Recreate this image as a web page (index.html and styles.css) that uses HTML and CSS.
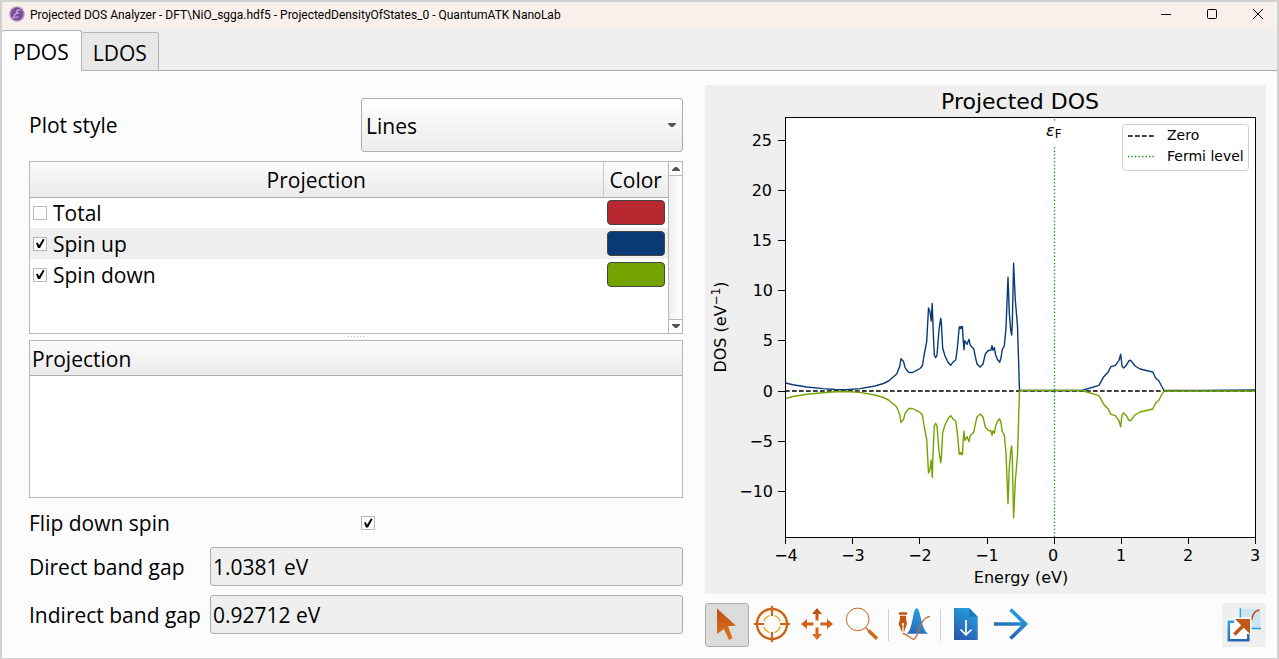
FILE: index.html
```html
<!DOCTYPE html>
<html lang="en">
<head>
<meta charset="utf-8">
<title>Projected DOS Analyzer</title>
<link rel="stylesheet" href="styles.css">
</head>
<body>
<div class="window">
  <header class="titlebar">
    <svg class="app-icon" viewBox="0 0 16 16" aria-hidden="true">
      <circle cx="8" cy="8" r="7.8" fill="#b79acb"/>
      <circle cx="8" cy="8" r="6.4" fill="#7d4a9e"/>
      <path d="M11.5 3.8C8.5 3.6 6.6 5 7.4 6.4c.4.7 1.4.8 2.4.7C7.4 7.300 5 8.600 5.200 10.200c.2 1.500 2.600 1.300 4.200.5M3.600 12.500l2-2.200" fill="none" stroke="#c9addb" stroke-width="1.200"/>
    </svg>
    <h1 class="title">Projected DOS Analyzer - DFT\NiO_sgga.hdf5 - ProjectedDensityOfStates_0 - QuantumATK NanoLab</h1>
    <div class="controls">
      <button class="control" type="button" aria-label="Minimize"><svg viewBox="0 0 12 12"><path d="M1 6.500h10" /></svg></button>
      <button class="control" type="button" aria-label="Maximize"><svg viewBox="0 0 12 12"><rect x="1.500" y="1.500" width="9" height="9" rx="1"/></svg></button>
      <button class="control" type="button" aria-label="Close"><svg viewBox="0 0 12 12"><path d="M1 1l10 10M11 1L1 11"/></svg></button>
    </div>
  </header>

  <div class="tabs" role="tablist">
    <button class="tab tab-active" type="button" role="tab" aria-selected="true">PDOS</button>
    <button class="tab" type="button" role="tab" aria-selected="false">LDOS</button>
  </div>

  <main class="content">
    <section class="settings">
      <div class="form-row">
        <label for="plot-style">Plot style</label>
        <div class="combo">
          <select id="plot-style" class="combo-select"><option>Lines</option></select>
          <svg class="combo-arrow" viewBox="0 0 8 4" aria-hidden="true"><path d="M0 0h8v1L5 4H3L0 1z"/></svg>
        </div>
      </div>

      <div class="projections">
        <div class="list">
          <table class="list-table">
            <thead><tr><th>Projection</th><th class="color-col">Color</th></tr></thead>
            <tbody>
              <tr><td><label class="check-label"><input class="check" type="checkbox">Total</label></td><td class="color-cell"><button class="swatch swatch-red" type="button" aria-label="Total color"></button></td></tr>
              <tr><td><label class="check-label"><input class="check" type="checkbox" checked>Spin up</label></td><td class="color-cell"><button class="swatch swatch-blue" type="button" aria-label="Spin up color"></button></td></tr>
              <tr><td><label class="check-label"><input class="check" type="checkbox" checked>Spin down</label></td><td class="color-cell"><button class="swatch swatch-green" type="button" aria-label="Spin down color"></button></td></tr>
            </tbody>
          </table>
          <div class="scrollbar">
            <button class="scroll-button" type="button" aria-label="Scroll up"><svg viewBox="0 0 8 4"><path d="M3 0h2l3 3v1H0V3z"/></svg></button>
            <button class="scroll-button" type="button" aria-label="Scroll down"><svg viewBox="0 0 8 4"><path d="M0 0h8v1L5 4H3L0 1z"/></svg></button>
          </div>
        </div>
        <div class="splitter"></div>
        <div class="detail">
          <table class="list-table detail-table"><thead><tr><th>Projection</th></tr></thead></table>
        </div>
      </div>

      <div class="form-row flip-row">
        <label for="flip">Flip down spin</label>
        <input id="flip" class="check" type="checkbox" checked>
      </div>

      <div class="gaps">
        <label for="direct">Direct band gap</label>
        <input id="direct" class="field" type="text" readonly value="1.0381 eV">
        <label for="indirect">Indirect band gap</label>
        <input id="indirect" class="field" type="text" readonly value="0.92712 eV">
      </div>
    </section>

    <section class="plot">
      <svg class="chart" viewBox="705 85 561 509" role="img" aria-label="Projected DOS">
        <rect x="785" y="117" width="471" height="421" fill="#fff"/>
        <path class="zero" d="M785 391H1255"/>
        <g class="series">
          <path class="spin-up" d="M785.500 383L793 384.800 806.700 387 823 388.600 835 389.500 846 389.700 860 388.600 875 386 883.500 383.500 888.500 381 893.300 377 896.700 374 899.700 366.500 901 358.700 903.500 361.500 905 367.300 906.700 370 909 372.500 912.500 372.500 916.700 370.300 920 368.500 922.300 366 924.300 354 926.700 341.700 928.500 308 930 311.700 931.200 321 932.200 303.500 933.500 338.300 934.300 355 935.700 357.700 937 355 939 330 940.700 318.300 941.300 322 942.700 348.300 945 356 948.300 362.700 950.700 365.300 953.300 361.700 955.700 360 957.300 348.300 959.300 326.700 960.200 328.500 961 326.500 961.800 328.500 962.400 326.500 963.300 341.700 964 349.700 964.700 340.700 967 344.300 969 339.300 970.300 345.300 973.700 348.700 975.700 358.300 977 364 980.300 367 983 364 985.300 354 988 350.700 991 350 992 345.700 993 350.300 994.300 347.700 995.700 355 997.300 359.300 999.700 362.300 1001 358 1002.300 349.300 1004.300 346 1006 328.300 1008 277.300 1009.300 313.300 1010.700 330 1011.700 335 1012.300 323.300 1013.600 263.300 1015.300 300 1017.500 326 1019.500 390.500H1081.700L1099 385.300 1103.300 377.300 1108.300 371.700 1111 366.700 1115.300 365.300 1119 360.300 1120.700 354.300 1122 366 1123.700 368 1126.300 365.300 1129 360.700 1130.700 360.300 1135 366 1140 369 1152.700 372 1155.700 378 1159 381 1161 385 1164 390.500H1200L1255 390"/>
          <path class="spin-down" d="M785.500 398.500L793 396.500 806.700 394.300 823 392.700 835 391.700 846 391.500 860 392.400 875 395 883.500 397.500 888.500 400 893.300 404 896.700 407 899.700 414.500 901 422.300 903.500 419.500 905 413.700 906.700 411 909 408.500 912.500 408.500 916.700 410.700 920 412.500 922.300 415 924.300 427 926.700 439.300 928.500 473 930 469.300 931.200 460 932.200 477.500 933.500 442.700 934.300 426 935.700 423.300 937 426 939 451 940.700 462.700 941.300 459 942.700 432.700 945 425 948.300 418.300 950.700 415.700 953.300 419.300 955.700 421 957.300 432.700 959.300 454.300 960.200 452.500 961 454.500 961.800 452.500 962.400 454.500 963.300 439.300 964 431.300 964.700 440.300 967 436.700 969 441.700 970.300 435.700 973.700 432.300 975.700 422.700 977 417 980.300 414 983 417 985.300 427 988 430.300 991 431 992 435.300 993 430.700 994.300 433.300 995.700 426 997.300 421.700 999.700 418.700 1001 423 1002.300 431.700 1004.300 435 1006 452.700 1008 503.700 1009.300 467.700 1010.700 451 1011.700 446 1012.300 457.700 1013.600 517.700 1015.300 481 1017.500 455 1019.500 390.500H1081.700L1099 395.700 1103.300 403.700 1108.300 409.300 1111 414.300 1115.300 415.700 1119 420.700 1120.700 426.700 1122 415 1123.700 413 1126.300 415.700 1129 420.300 1130.700 420.700 1135 415 1140 412 1152.700 409 1155.700 403 1159 400 1161 396 1164 391H1255"/>
        </g>
        <path class="fermi" d="M1054.500 537V117"/>
        <rect x="1042" y="122" width="24" height="23" fill="#fff"/>
        <text class="tick" x="1046" y="136"><tspan font-style="italic">ε</tspan><tspan class="sub" dy="2">F</tspan></text>
        <rect class="axes" x="785.500" y="117.500" width="470" height="420"/>
        <path class="axes" d="M778 140.500h7M778 190.500h7M778 240.500h7M778 290.500h7M778 340.500h7M778 391.500h7M778 441.500h7M778 491.500h7M785.500 538v6M852.500 538v6M919.500 538v6M987.500 538v6M1054.500 538v6M1121.500 538v6M1188.500 538v6M1255.500 538v6"/>
        <g class="tick" text-anchor="end">
          <text x="772" y="146">25</text><text x="772" y="196">20</text><text x="772" y="246">15</text><text x="773" y="296">10</text>
          <text x="773" y="346">5</text><text x="773" y="397">0</text><text x="773" y="447">−5</text><text x="773" y="497">−10</text>
        </g>
        <g class="tick" text-anchor="middle">
          <text x="786" y="561">−4</text><text x="853" y="561">−3</text><text x="920" y="561">−2</text><text x="987" y="561">−1</text>
          <text x="1053" y="561">0</text><text x="1121" y="561">1</text><text x="1188" y="561">2</text><text x="1255" y="561">3</text>
          <text x="1021" y="583">Energy (eV)</text>
          <text transform="translate(726 327) rotate(-90)">DOS (eV<tspan class="sub" dy="-6">−1</tspan><tspan dy="6">)</tspan></text>
        </g>
        <text class="chart-title" x="1020" y="109" text-anchor="middle">Projected DOS</text>
        <rect x="1122.500" y="124.500" width="126" height="46" rx="3" fill="#fff" stroke="#d0d0d0"/>
        <path class="zero" d="M1128 136H1156"/>
        <path class="fermi" d="M1128 156.500H1156"/>
        <g class="legend"><text x="1167" y="140">Zero</text><text x="1167" y="161">Fermi level</text></g>
      </svg>

      <div class="toolbar">
        <svg class="defs" aria-hidden="true"><defs>
          <linearGradient id="orange" x1="0" y1="0" x2="0" y2="1"><stop offset="0" stop-color="#bd4f12"/><stop offset="1" stop-color="#dc7420"/></linearGradient>
          <linearGradient id="blue" gradientUnits="userSpaceOnUse" x1="32" y1="6" x2="12" y2="37"><stop offset="0" stop-color="#27a4e4"/><stop offset="1" stop-color="#2a54a8"/></linearGradient>
          <linearGradient id="box-blue" gradientUnits="userSpaceOnUse" x1="10" y1="18" x2="16" y2="38"><stop offset="0" stop-color="#2a9fe0"/><stop offset="1" stop-color="#2860b4"/></linearGradient>
        </defs></svg>
        <button class="tool tool-active" type="button" aria-label="Select"><svg viewBox="0 0 44 44"><path fill="url(#orange)" d="M12 5.500L31 22.700 23 23.300 27.500 35.300 24 37 18.900 26 12 31z"/></svg></button>
        <button class="tool" type="button" aria-label="Recenter"><svg viewBox="0 0 44 44" fill="none"><circle cx="22" cy="21" r="8.700" stroke="#f2a621" stroke-width="1.400"/><path d="M22 9v6M22 27v6M10 21h6M28 21h6" stroke="#fcfcfc" stroke-width="5"/><circle cx="22" cy="21" r="15" stroke="#cc651b" stroke-width="2.400"/><path d="M22 3v10M22 29v10M4 21h10M30 21h10" stroke="#cc651b" stroke-width="2.200"/></svg></button>
        <button class="tool" type="button" aria-label="Pan"><svg viewBox="0 0 44 44"><path fill="url(#orange)" d="M22 5l5 6h-3.500v6.500h-3V11H17zM22 37l-5-6h3.500v-6.500h3V31H27zM6 21l6-5v3.500h6.500v3H12V26zM38 21l-6 5v-3.500h-6.500v-3H32V16z"/></svg></button>
        <button class="tool" type="button" aria-label="Zoom"><svg viewBox="0 0 44 44" fill="none"><circle cx="17.700" cy="16.400" r="11.300" fill="#fff" stroke="#c85f18"/><path d="M25.500 24.500l4 4" stroke="#cc651b" stroke-width="1.500"/><path d="M28.500 27.500l8.500 8.300" stroke="#cf6a1c" stroke-width="3.600"/></svg></button>
        <span class="separator"></span>
        <button class="tool" type="button" aria-label="Edit curve"><svg viewBox="0 0 44 44"><path fill="url(#blue)" d="M14.500 30.700C21 28 20.500 5.300 24.700 5.300S29 28 36.500 30.700z"/><path d="M10.700 30.500C15.500 31 18 35.500 21.500 36.300 27 35.500 27 14 38 13.700" fill="none" stroke="#c96b32" stroke-width="1.300"/><path fill="#c3560f" d="M7 9.200h8v2.600H7zM8 12.800h6v3l1 5-3.200 9-.3-7.500a1.200 1.200 0 1 0-1 0l-.3 7.500L6.600 21l1.400-5z"/></svg></button>
        <span class="separator"></span>
        <button class="tool" type="button" aria-label="Export"><svg viewBox="0 0 44 44"><path fill="url(#blue)" d="M10 5h15l8.700 8.700V37H10z"/><path fill="#1977bd" d="M25 5l8.700 8.700H25z"/><path fill="#fcfcfc" d="M25.500 4H35v9.500z"/><path d="M22 17v14.500M16.500 26.500L22 31.800l5.500-5.300" fill="none" stroke="#fff" stroke-width="1.700"/></svg></button>
        <button class="tool" type="button" aria-label="Next"><svg viewBox="0 0 44 44"><path d="M5 21h32M21.500 6.500L36.500 21l-15 14.500" fill="none" stroke="url(#blue)" stroke-width="3.700"/></svg></button>
        <button class="tool tool-popout" type="button" aria-label="Open in new window"><svg viewBox="0 0 44 44" fill="none"><path fill="#cbe5f2" d="M18 6h20.500v20H18z"/><path d="M18.300 5v20.500H39" stroke="#22a2e3" stroke-width="1.300"/><path d="M29.500 17C31 10.500 33 7 37.500 7.200" stroke="#c3571a" stroke-width="1.700"/><path d="M5 16.500h23v22H5z" fill="#fff"/><path d="M12 18.800H6.800v18.500h19.500V31" stroke="url(#box-blue)" stroke-width="2.500"/><path d="M12 31.800L23 21" stroke="#fff" stroke-width="7"/><path d="M10.500 14.500h19V33z" fill="#fff"/><path d="M12.300 31.500L24 20" stroke="#c3571a" stroke-width="3.600"/><path d="M13 16h15v15z" fill="#c3571a"/></svg></button>
      </div>
    </section>
  </main>
</div>
</body>
</html>
```
FILE: styles.css
```css
* {
  box-sizing: border-box;
}

body {
  margin: 0;
  font: 21px/28px "Open Sans", "Noto Sans", sans-serif;
  color: #000;
}

button,
input,
select {
  margin: 0;
  padding: 0;
  border: 0;
  font: inherit;
  color: inherit;
}

.window {
  display: flex;
  flex-direction: column;
  min-height: 100vh;
  border: 2px solid #d1d1d1;
  border-bottom-width: 1px;
  background: #fcfcfc;
}

.titlebar {
  display: flex;
  align-items: center;
  height: 28px;
  padding-left: 7px;
  background: #f9f0ec;
}

.app-icon {
  width: 16px;
  height: 16px;
  margin: 0 5px 4px 0;
}

.title {
  flex: 1;
  margin: 0 0 2px;
  font: 12px/16px Roboto, "Open Sans", sans-serif;
}

.controls {
  display: flex;
  gap: 8px;
}

.control {
  display: grid;
  place-items: center;
  width: 38px;
  height: 24px;
  margin-bottom: 4px;
  background: none;
}

.control svg {
  width: 12px;
  height: 12px;
  fill: none;
  stroke: #000;
}

.tabs {
  display: flex;
  align-items: flex-end;
  height: 41px;
  background: linear-gradient(#aaa, #aaa) bottom / 100% 1px no-repeat #efefef;
}

.tab {
  height: 39px;
  padding: 2px 11px 0;
  border: 1px solid #b4b4b4;
  border-left: 0;
  border-radius: 3px 3px 0 0;
  background: #e8e8e8;
}

.tab-active {
  height: 41px;
  padding-right: 12px;
  border-bottom: 0;
  background: linear-gradient(#fff, #fcfcfc);
}

.content {
  display: grid;
  grid-template-columns: 654fr 561fr;
  gap: 22px;
  flex: 1;
  padding: 14px 11px 11px 27px;
}

.settings {
  display: flex;
  flex-direction: column;
  padding: 13px 0;
}

.form-row {
  display: grid;
  grid-template-columns: 1fr 1fr;
  gap: 10px;
  align-items: center;
}

.combo {
  display: grid;
  align-items: center;
}

.combo-select {
  grid-area: 1 / 1;
  appearance: none;
  width: 100%;
  height: 54px;
  padding: 2px 4px 0;
  border: 1px solid #adadad;
  border-radius: 3px;
  background: linear-gradient(#fff, #ececec);
}

.combo-arrow {
  grid-area: 1 / 1;
  justify-self: end;
  width: 8px;
  height: 4px;
  margin-right: 7px;
  fill: #555;
  pointer-events: none;
}

.projections {
  display: flex;
  flex: 1;
  flex-direction: column;
  margin-top: 9px;
}

.list {
  display: flex;
  flex: 173 0 0;
  border: 1px solid #b8b8b8;
  background: #fff;
}

.list-table {
  flex: 1;
  align-self: flex-start;
  width: 100%;
  border-collapse: collapse;
}

.list-table th {
  height: 35px;
  padding: 2px 0 0;
  border-bottom: 1px solid #ababab;
  background: linear-gradient(#fcfcfc, #eaeaea);
  font-weight: 400;
}

.list-table .color-col {
  width: 65px;
  border-left: 1px solid #c8c8c8;
}

.list-table td {
  height: 31px;
  padding: 0 3px;
}

.list-table .color-cell {
  padding: 0;
}

.list-table tr:nth-child(2) td {
  background: #efefef;
}

.check-label {
  display: flex;
  align-items: center;
  gap: 6px;
}

.check {
  appearance: none;
  display: grid;
  width: 14px;
  height: 14px;
  border: 1px solid #b8b8b8;
  background: #fff;
}

.check:checked::before {
  content: "";
  background: #000;
  clip-path: polygon(17% 47%, 32% 42%, 42% 65%, 75% 10%, 88% 18%, 50% 88%, 33% 88%);
}

.swatch {
  display: block;
  width: 58px;
  height: 25px;
  margin: auto;
  border: 1px solid #444;
  border-radius: 4px;
}

.swatch-red {
  background: #b72831;
}

.swatch-blue {
  background: #0a3a76;
}

.swatch-green {
  background: #74a300;
}

.scrollbar {
  display: flex;
  flex-direction: column;
  justify-content: space-between;
  width: 14px;
  border-left: 1px solid #b8b8b8;
  background: linear-gradient(90deg, #efefef, #fff);
}

.scroll-button {
  display: grid;
  place-items: center;
  height: 14px;
  border-bottom: 1px solid #b8b8b8;
  background: #fbfbfb;
}

.scroll-button:last-child {
  border-top: 1px solid #b8b8b8;
  border-bottom: 0;
}

.scroll-button svg {
  width: 8px;
  height: 4px;
  fill: #555;
}

.splitter {
  align-self: center;
  width: 17px;
  height: 1px;
  margin: 2px 0 3px;
  background: repeating-linear-gradient(90deg, #bbb 0 1px, transparent 1px 3px);
}

.detail {
  flex: 158 0 0;
  border: 1px solid #b8b8b8;
  background: #fff;
}

.detail-table th {
  padding-left: 2px;
  text-align: left;
}

.flip-row {
  margin: 11px 0 10px;
}

.gaps {
  display: grid;
  grid-template-columns: auto 1fr;
  gap: 9px;
  align-items: center;
}

.field {
  width: 100%;
  height: 39px;
  padding: 0 2px;
  border: 1px solid #adadad;
  border-radius: 3px;
  background: #efefef;
}

.plot {
  display: flex;
  flex-direction: column;
  gap: 9px;
}

.chart {
  display: block;
  width: 100%;
  background: #efefef;
  font-family: "DejaVu Sans", sans-serif;
}

.axes {
  fill: none;
  stroke: #000;
}

.zero,
.fermi {
  fill: none;
  stroke: #000;
  stroke-width: 1.333;
  stroke-dasharray: 4.700 2.300;
}

.fermi {
  stroke: #008f00;
  stroke-dasharray: 1.300 2.200;
}

.series {
  fill: none;
  stroke-width: 1.400;
  stroke-linejoin: round;
}

.spin-up {
  stroke: #0a3a76;
}

.spin-down {
  stroke: #74a300;
}

.tick {
  font-size: 16px;
}

.sub {
  font-size: 12px;
}

.chart-title {
  font-size: 22px;
}

.legend {
  font-size: 14px;
}

.toolbar {
  display: flex;
  align-items: center;
  gap: 1px;
}

.defs {
  position: absolute;
  width: 0;
  height: 0;
}

.tool {
  width: 44px;
  height: 44px;
  border: 1px solid transparent;
  border-radius: 3px;
  background: none;
}

.tool svg {
  display: block;
  width: 44px;
  height: 44px;
  margin: -1px;
}

.tool-active {
  border-color: #adadad;
  background: #dcdcdc;
}

.tool-popout {
  margin-left: auto;
  border-radius: 0;
  background: #efefef;
}

.separator {
  width: 1px;
  height: 32px;
  margin: 0 2px 0 3px;
  background: #d0d0d0;
}
```
